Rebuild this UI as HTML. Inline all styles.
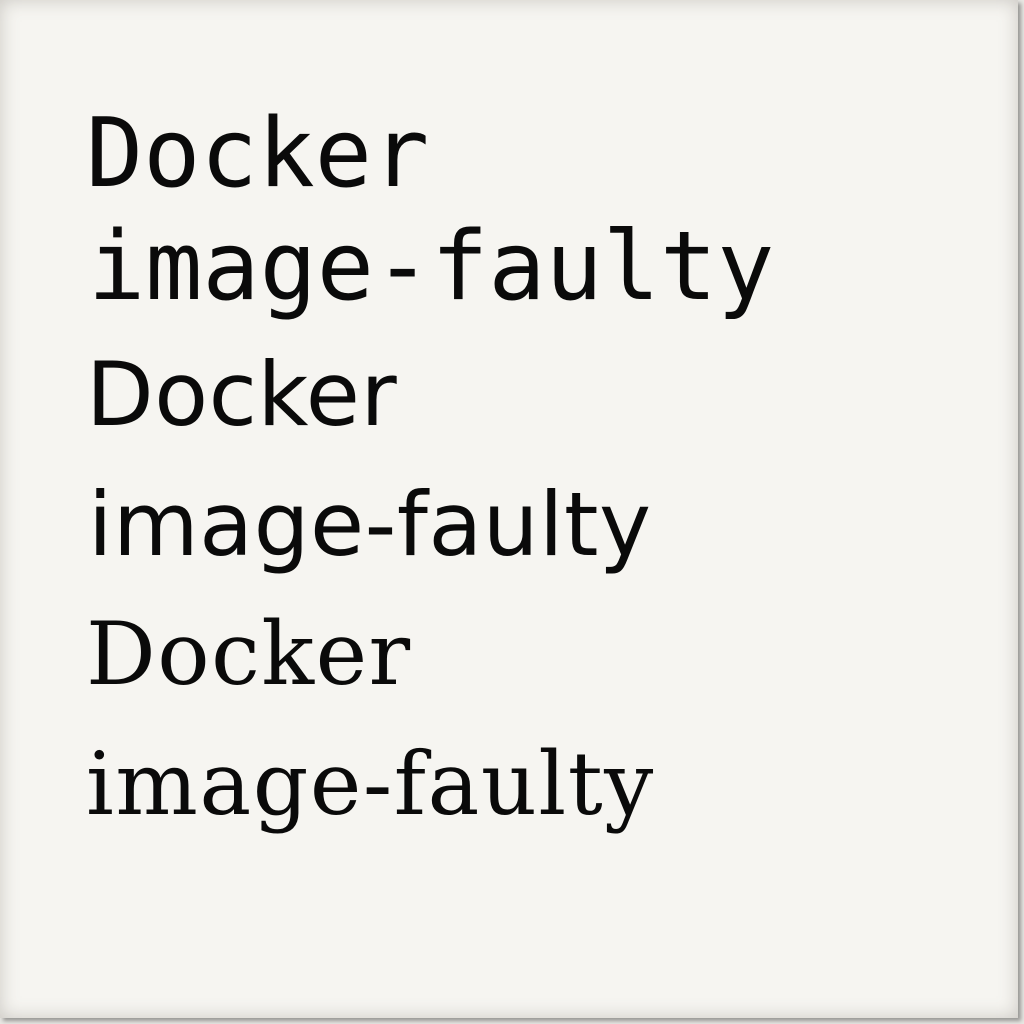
<!DOCTYPE html>
<html><head><meta charset="utf-8"><style>
html,body{margin:0;padding:0;}
body{width:1024px;height:1024px;background:#e8e7e3;position:relative;overflow:hidden;}
.paper{position:absolute;left:0;top:0;width:1018px;height:1018px;background:#f6f5f1;box-shadow:inset 0 0 18px rgba(120,115,105,0.35),3px 3px 4px rgba(0,0,0,0.35);}
.t{position:absolute;left:86px;line-height:1;color:#0a0a0a;white-space:nowrap;margin:0;}
.m{font-family:"DejaVu Sans Mono","Liberation Mono",monospace;font-size:95px;}
.s{font-family:"DejaVu Sans","Liberation Sans",sans-serif;font-size:88px;letter-spacing:0.5px;}
.f{font-family:"DejaVu Serif","Liberation Serif",serif;font-size:87px;letter-spacing:1.5px;}
</style></head><body>
<div class="paper"></div>
<div class="t m" style="top:107px">Docker</div>
<div class="t m" style="top:220px;left:88px">image-faulty</div>
<div class="t s" style="top:351px">Docker</div>
<div class="t s" style="top:481px;left:88px">image-faulty</div>
<div class="t f" style="top:611px">Docker</div>
<div class="t f" style="top:741px">image-faulty</div>
</body></html>
